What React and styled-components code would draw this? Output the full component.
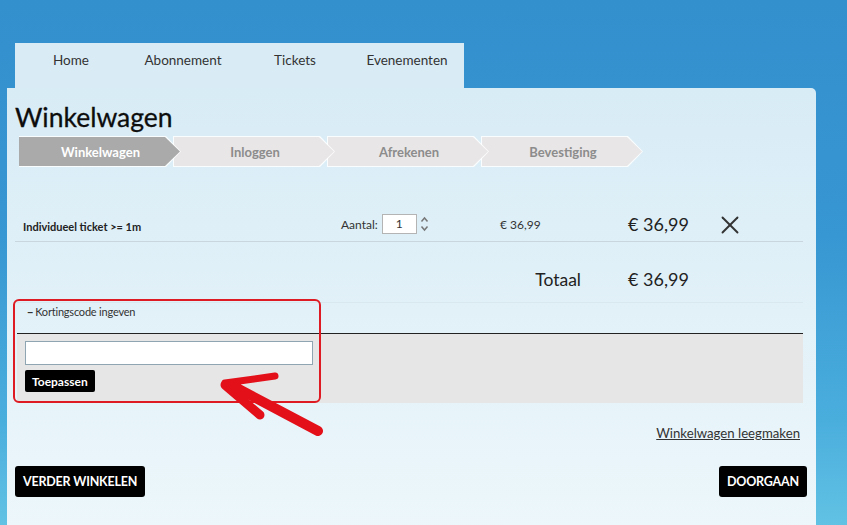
import styled, { createGlobalStyle } from "styled-components";
import { X } from "lucide-react";

const GlobalStyle = createGlobalStyle`
  html, body {
    margin: 0;
    padding: 0;
    height: 100%;
  }
  body {
    font-family: Lato, "Open Sans", sans-serif;
    background: linear-gradient(180deg, #348fcd 0%, #3797d2 45%, #4aaedd 80%, #62c2e4 100%);
    overflow: hidden;
  }
`;

const Page = styled.div`
  min-height: 100vh;
  padding-top: 43px;
  box-sizing: border-box;
  display: flex;
  flex-direction: column;
`;

const NavTab = styled.nav`
  margin-left: 15px;
  width: 449px;
  height: 45px;
  background: #d9ecf6;
  display: grid;
  grid-template-columns: repeat(4, 112px);
  box-sizing: border-box;
  padding-top: 9px;
`;

const NavItem = styled.a`
  text-align: center;
  font-size: 13.5px;
  line-height: 17px;
  color: #333;
  text-decoration: none;
`;

const Panel = styled.main`
  position: relative;
  margin-left: 7px;
  width: 809px;
  flex: 1;
  box-sizing: border-box;
  padding: 14px 13px 40px 8px;
  border-radius: 0 5px 0 0;
  background: linear-gradient(180deg, #d8ecf6 0%, #e2f1f8 50%, #edf7fb 100%);
`;

const Title = styled.h1`
  margin: 0;
  font-size: 26.5px;
  line-height: 30px;
  font-weight: 400;
  color: #0d0d0d;
  -webkit-text-stroke: 0.3px #0d0d0d;
`;

const Stepper = styled.div`
  display: flex;
  margin: 4px 0 0 4px;
  height: 31px;
`;

const arrow = "polygon(0 0, calc(100% - 15px) 0, 100% 50%, calc(100% - 15px) 100%, 0 100%)";

const StepOuter = styled.div`
  width: 162px;
  height: 31px;
  margin-left: ${({ $first }) => ($first ? "0" : "-8px")};
  z-index: ${({ $z }) => $z};
  background: rgba(255, 255, 255, 0.85);
  clip-path: ${arrow};
  padding: 1px 1px 1px ${({ $first }) => ($first ? "0" : "1px")};
  box-sizing: border-box;
`;

const StepInner = styled.div`
  height: 100%;
  clip-path: ${arrow};
  background: ${({ $active }) => ($active ? "#aaaaaa" : "#e8e6e6")};
  color: ${({ $active }) => ($active ? "#fff" : "#8c8c8c")};
  font-size: 13px;
  font-weight: 700;
  display: flex;
  align-items: center;
  justify-content: center;
  padding-left: 2px;
`;

const Row = styled.div`
  display: grid;
  grid-template-columns: 318px 159px 128px 94px 1fr;
  align-items: center;
  padding-left: 8px;
  box-sizing: border-box;
  height: ${({ $h }) => $h}px;
  margin-top: ${({ $mt }) => $mt || 0}px;
  border-bottom: 1px solid ${({ $line }) => $line};
`;

const TotalRow = styled(Row)`
  padding-top: 14px;
`;

const ItemName = styled.div`
  font-size: 11px;
  font-weight: 700;
  color: #222;
  padding-top: 5px;
`;

const Qty = styled.div`
  display: flex;
  align-items: center;
  font-size: 12px;
  color: #333;
  gap: 4px;
`;

const QtyInput = styled.div`
  width: 35px;
  height: 20px;
  box-sizing: border-box;
  border: 1px solid #b4b4b4;
  background: #fff;
  font-size: 12px;
  line-height: 18px;
  padding-left: 13px;
`;

const Spinner = styled.svg`
  margin-left: -2px;
`;

const SmallPrice = styled.div`
  font-size: 12px;
  color: #333;
`;

const BigPrice = styled.div`
  font-size: 18px;
  color: #222;
`;

const TotalLabel = styled.div`
  font-size: 17.5px;
  color: #222;
  text-align: right;
  padding-right: 47px;
`;

const RemoveButton = styled.button`
  border: none;
  background: none;
  padding: 0;
  margin: 1px 0 0 -7px;
  width: 30px;
  height: 30px;
  display: flex;
  color: #333;
`;

const Korting = styled.section`
  position: relative;
`;

const KortingHead = styled.div`
  height: 31px;
  box-sizing: border-box;
  padding: 2px 0 0 10px;
  font-size: 11px;
  color: #333;
  border-bottom: 1px solid #222;
  margin-left: 2px;
  letter-spacing: -0.2px;
`;

const Dash = styled.b`
  font-weight: 900;
  margin-right: 2px;
`;

const KortingBody = styled.div`
  margin-left: 2px;
  background: #e6e6e6;
  padding: 7px 8px 11px;
  display: flex;
  flex-direction: column;
  align-items: flex-start;
  gap: 5px;
`;

const CodeInput = styled.input`
  width: 288px;
  height: 24px;
  box-sizing: border-box;
  border: 1px solid #8fa6b2;
  background: #fff;
  margin: 0;
`;

const ApplyButton = styled.button`
  background: #000;
  color: #fff;
  border: none;
  border-radius: 2px;
  height: 22px;
  padding: 0 7px;
  font-family: Lato, sans-serif;
  font-size: 12px;
  font-weight: 700;
`;

const Highlight = styled.div`
  position: absolute;
  left: -2px;
  top: -4px;
  width: 308px;
  height: 104px;
  box-sizing: border-box;
  border: 2px solid #de1a22;
  border-radius: 6px;
  pointer-events: none;
`;

const ArrowMark = styled.svg`
  position: absolute;
  left: 200px;
  top: 60px;
  width: 130px;
  height: 80px;
  overflow: visible;
  pointer-events: none;
`;

const ClearRow = styled.div`
  display: flex;
  justify-content: flex-end;
  margin: 22px 3px 0 0;
`;

const ClearLink = styled.a`
  font-size: 13.2px;
  color: #333;
  text-decoration: underline;
  line-height: 16px;
`;

const Actions = styled.div`
  display: flex;
  justify-content: space-between;
  margin-top: 25px;
  margin-right: -4px;
`;

const DarkButton = styled.button`
  background: #000;
  color: #fff;
  border: none;
  border-radius: 3px;
  height: 31px;
  padding: 0 8px;
  font-family: Lato, sans-serif;
  font-size: 12.5px;
  font-weight: 700;
  letter-spacing: -0.2px;
`;

const steps = ["Winkelwagen", "Inloggen", "Afrekenen", "Bevestiging"];

const App = () => {
  return (
    <>
      <GlobalStyle />
      <Page>
        <NavTab>
          <NavItem>Home</NavItem>
          <NavItem>Abonnement</NavItem>
          <NavItem>Tickets</NavItem>
          <NavItem>Evenementen</NavItem>
        </NavTab>
        <Panel>
          <Title>Winkelwagen</Title>
          <Stepper>
            {steps.map((s, i) => (
              <StepOuter key={s} $first={i === 0} $z={10 - i}>
                <StepInner $active={i === 0}>{s}</StepInner>
              </StepOuter>
            ))}
          </Stepper>

          <Row $h={35} $mt={40} $line="#c9d6dd">
            <ItemName>Individueel ticket &gt;= 1m</ItemName>
            <Qty>
              Aantal:
              <QtyInput>1</QtyInput>
              <Spinner width="11" height="18" viewBox="0 0 11 18">
                <path d="M2.5 6.5 L5.5 3 L8.5 6.5" fill="none" stroke="#777" strokeWidth="1.5" />
                <path d="M2.5 11.5 L5.5 15 L8.5 11.5" fill="none" stroke="#777" strokeWidth="1.5" />
              </Spinner>
            </Qty>
            <SmallPrice>€ 36,99</SmallPrice>
            <BigPrice>€ 36,99</BigPrice>
            <RemoveButton>
              <X size={30} strokeWidth={1.5} />
            </RemoveButton>
          </Row>

          <TotalRow $h={61} $line="#d9e8ef">
            <div />
            <div />
            <TotalLabel>Totaal</TotalLabel>
            <BigPrice>€ 36,99</BigPrice>
            <div />
          </TotalRow>

          <Korting>
            <KortingHead>
              <Dash>−</Dash>Kortingscode ingeven
            </KortingHead>
            <KortingBody>
              <CodeInput type="text" />
              <ApplyButton>Toepassen</ApplyButton>
            </KortingBody>
            <Highlight />
            <ArrowMark viewBox="0 0 130 80">
              <path d="M103 68 L16 22" stroke="#e3101a" strokeWidth="10" strokeLinecap="round" fill="none" />
              <path d="M10 20 L60 13" stroke="#e3101a" strokeWidth="7" strokeLinecap="round" fill="none" />
              <path d="M10 22 L45 52" stroke="#e3101a" strokeWidth="9" strokeLinecap="round" fill="none" />
              <path d="M7 18 L28 17 L20 36 Z" fill="#e3101a" />
            </ArrowMark>
          </Korting>

          <ClearRow>
            <ClearLink>Winkelwagen leegmaken</ClearLink>
          </ClearRow>

          <Actions>
            <DarkButton>VERDER WINKELEN</DarkButton>
            <DarkButton>DOORGAAN</DarkButton>
          </Actions>
        </Panel>
      </Page>
    </>
  );
};

export default App;
